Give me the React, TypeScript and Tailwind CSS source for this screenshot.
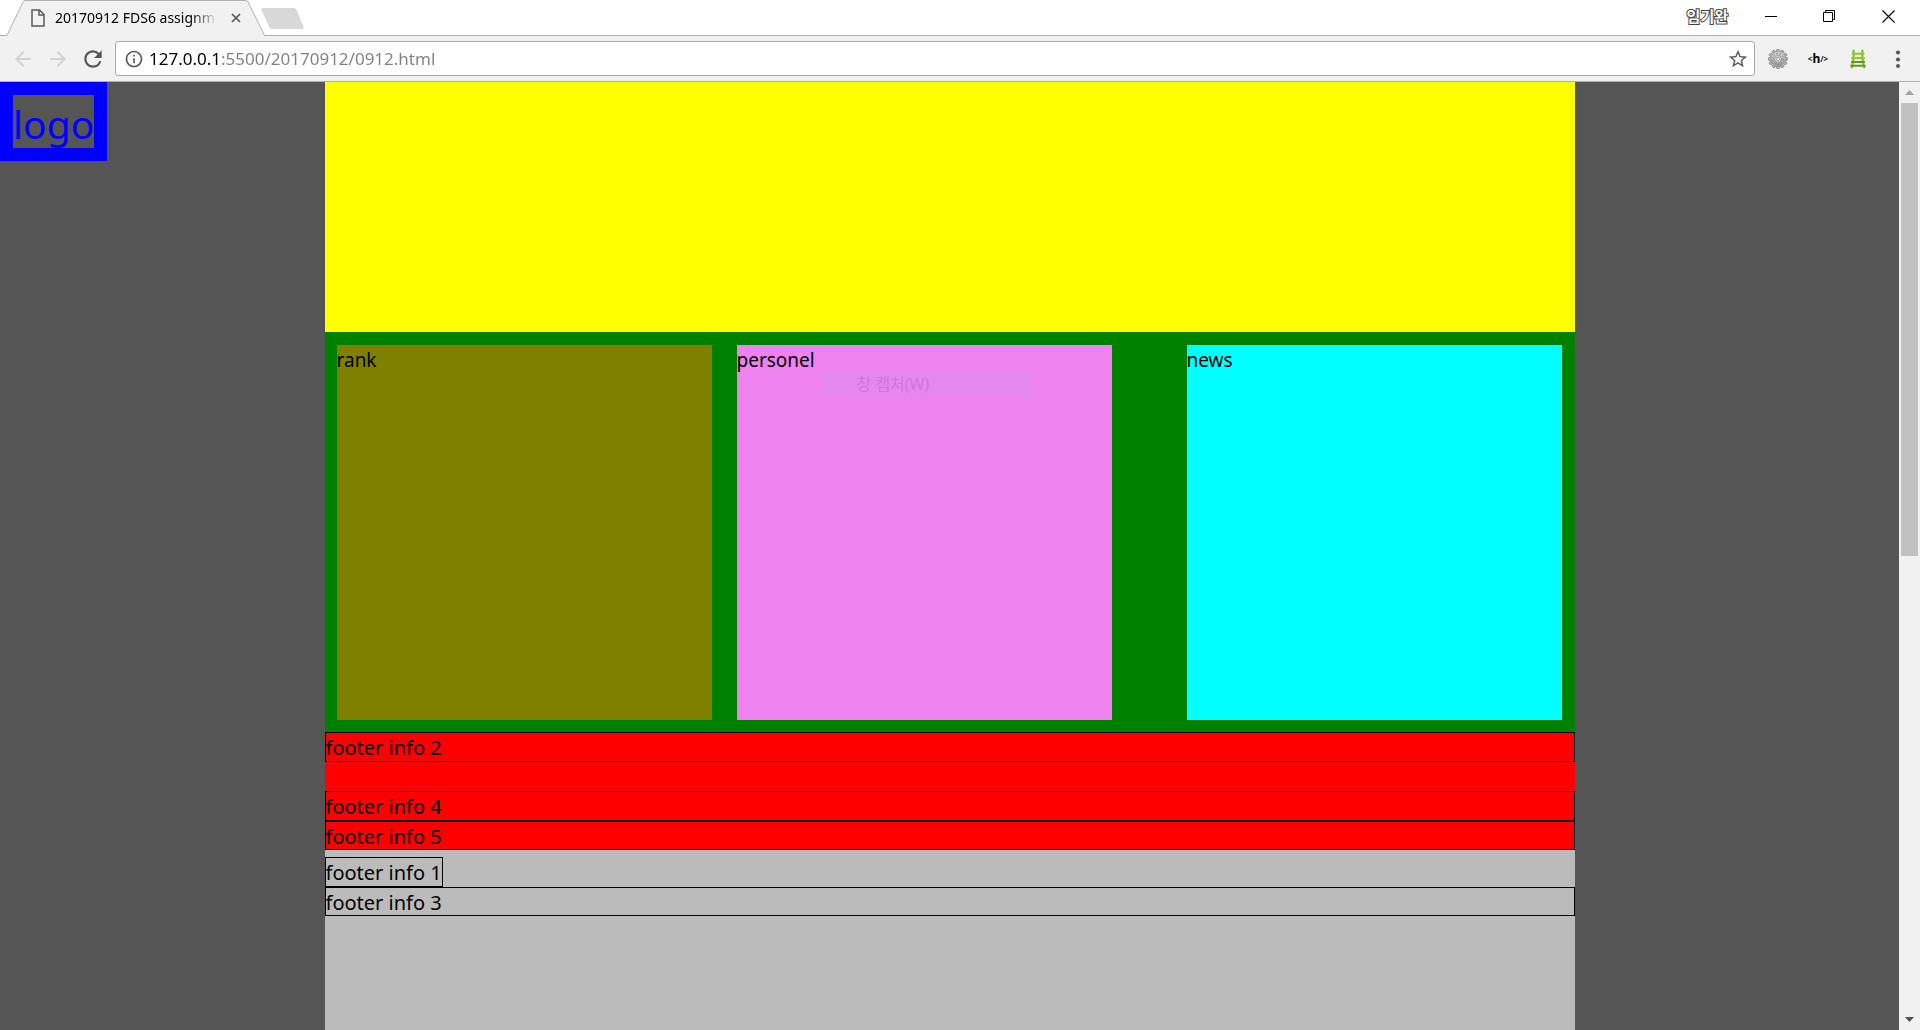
import type { ReactNode } from "react";
import {
  MdArrowBack,
  MdArrowForward,
  MdInfoOutline,
  MdRefresh,
  MdStarBorder,
} from "react-icons/md";

function IconButton({
  label,
  className,
  children,
}: {
  label: string;
  className: string;
  children: ReactNode;
}) {
  return (
    <button
      type="button"
      aria-label={label}
      className={`flex shrink-0 items-center justify-center ${className}`}
    >
      {children}
    </button>
  );
}

function PageIcon() {
  return (
    <svg width="14" height="18" viewBox="0 0 14 18" fill="none" stroke="#5a5a5a" strokeWidth="1.5">
      <path d="M1 1h7.5l4.5 4.5V17H1z" />
      <path d="M8 1v5h5" />
    </svg>
  );
}

function Gear() {
  const teeth = Array.from({ length: 12 }, (_, i) => (i * 360) / 12);
  return (
    <svg width="20" height="20" viewBox="0 0 20 20">
      <defs>
        <linearGradient id="metal" x1="0" y1="0" x2="0" y2="1">
          <stop offset="0" stopColor="#dcdcdc" />
          <stop offset="1" stopColor="#9a9a9a" />
        </linearGradient>
      </defs>
      {teeth.map((a) => (
        <rect
          key={a}
          x="8.6"
          y="0.3"
          width="2.8"
          height="3.4"
          rx="0.9"
          fill="#b4b4b4"
          stroke="#777"
          strokeWidth="0.7"
          transform={`rotate(${a} 10 10)`}
        />
      ))}
      <circle cx="10" cy="10" r="7.4" fill="url(#metal)" stroke="#8c8c8c" strokeWidth="0.6" />
      <circle cx="10" cy="10" r="5.3" fill="none" stroke="#7c7c7c" strokeWidth="1" strokeDasharray="1.8 1.4" />
      <circle cx="10" cy="10" r="3.4" fill="#e2e2e2" stroke="#858585" strokeWidth="0.8" />
      <circle cx="10" cy="10" r="1.6" fill="#fafafa" stroke="#777" strokeWidth="0.7" />
    </svg>
  );
}

function Ladder() {
  return (
    <svg width="16" height="20" viewBox="0 0 16 20" fill="none" strokeLinecap="round">
      <path d="M3.500 1.500C4.200 7 3.200 13 1.800 18.500M12.500 1.500C11.800 7 12.800 13 14.200 18.500" stroke="#86bf2a" strokeWidth="2.200" />
      <path d="M2.500 4.800h11M2 9h12" stroke="#8fcc1e" strokeWidth="2" />
      <path d="M1.800 13h12.400M1.200 16.800h13.600" stroke="#5f9a1c" strokeWidth="2" />
    </svg>
  );
}

function TitleBar() {
  return (
    <header className="flex h-9 shrink-0 items-stretch border-b border-[#b0b0b0] bg-white">
      <div className="relative -mb-px ml-[7px] flex w-[258px] items-center pl-6">
        <svg className="absolute inset-0" width="258" height="36" viewBox="0 0 258 36">
          <path d="M0 36v-1l16-33q.7-1.500 2-1.500H239q1.300 0 2 1.500l16 33v1z" fill="#f1f1f1" />
          <path d="M0 35.500 16 2q.7-1.500 2-1.500H239q1.300 0 2 1.500L257.500 35.500" fill="none" stroke="#b0b0b0" />
        </svg>
        <div className="relative flex items-center">
          <PageIcon />
          <span className="ml-[10px] w-[167px] text-sm whitespace-nowrap">
            <span className="bg-linear-to-r from-black from-85% to-black/10 bg-clip-text text-transparent">
              20170912 FDS6 assignm
            </span>
          </span>
          <IconButton label="Close tab" className="ml-1 size-5">
            <svg width="10" height="10" viewBox="0 0 10 10" stroke="#555" strokeWidth="1.700">
              <path d="M1 1l8 8M9 1L1 9" />
            </svg>
          </IconButton>
        </div>
      </div>
      <IconButton label="New tab" className="-ml-1 h-[38px]">
        <svg width="43" height="22" viewBox="0 0 43 22">
          <path d="M2 .5H33q1.500 0 2.200 1.500L42 19q.6 1.500-1 1.500H11q-1.500 0-2.200-1.500L.8 2Q.3.500 2 .5z" fill="#d8d8d8" stroke="#cdcdcd" strokeWidth=".6" />
        </svg>
      </IconButton>
      <div className="ml-auto flex h-8 items-center pr-[2px]">
        <span className="mr-[14px] text-[15px] font-bold text-white [-webkit-text-stroke:2px_#444] [paint-order:stroke]">
          임기완
        </span>
        <IconButton label="Minimize" className="w-[58px]">
          <svg width="13" height="13" viewBox="0 0 13 13" stroke="#000">
            <path d="M0 6.500h12" />
          </svg>
        </IconButton>
        <IconButton label="Restore" className="w-[58px]">
          <svg width="13" height="13" viewBox="0 0 13 13" fill="none" stroke="#000">
            <path d="M.5 2.500h9v9h-9zM2.500 2.500v-2h9v9h-2" />
          </svg>
        </IconButton>
        <IconButton label="Close" className="w-[60px]">
          <svg width="13" height="13" viewBox="0 0 13 13" stroke="#000" strokeWidth="1.100">
            <path d="M.5.5l12 12M12.500.5l-12 12" />
          </svg>
        </IconButton>
      </div>
    </header>
  );
}

function Toolbar() {
  return (
    <nav className="flex h-[46px] shrink-0 items-center border-b border-[#b0b0b0] bg-[#f1f1f1] pr-[2px] pl-[5px]">
      <IconButton label="Back" className="w-[35px] text-[#d2d2d2]">
        <MdArrowBack size={24} />
      </IconButton>
      <IconButton label="Forward" className="w-[35px] text-[#d2d2d2]">
        <MdArrowForward size={24} />
      </IconButton>
      <IconButton label="Reload" className="w-[35px] text-[#555]">
        <MdRefresh size={26} />
      </IconButton>
      <div className="ml-[5px] flex h-[35px] min-w-0 flex-1 items-center rounded-[3px] border border-[#a9a9a9] bg-white pr-1 pl-2 text-[#5a5a5a]">
        <MdInfoOutline size={20} className="shrink-0" />
        <input
          type="text"
          aria-label="Address"
          defaultValue="127.0.0.1:5500/20170912/0912.html"
          className="ml-[5px] min-w-0 flex-1 bg-[linear-gradient(to_right,#000_70px,#808080_70px)] bg-clip-text text-[17px] text-transparent outline-none"
        />
        <IconButton label="Bookmark" className="size-6">
          <MdStarBorder size={22} />
        </IconButton>
      </div>
      <IconButton label="Settings extension" className="ml-[3px] w-10">
        <Gear />
      </IconButton>
      <IconButton label="HTML extension" className="w-10 text-[8px] font-bold text-[#222]">
        &lt;<span className="text-[12px] text-black">h</span>/&gt;
      </IconButton>
      <IconButton label="Ladder extension" className="w-10">
        <Ladder />
      </IconButton>
      <IconButton label="Menu" className="w-10">
        <svg width="6" height="18" viewBox="0 0 6 18" fill="#5a5a5a">
          <circle cx="3" cy="2.500" r="2.100" />
          <circle cx="3" cy="9.500" r="2.100" />
          <circle cx="3" cy="16" r="2" />
        </svg>
      </IconButton>
    </nav>
  );
}

function ScrollBar() {
  return (
    <div className="flex w-[21px] shrink-0 flex-col bg-[#f1f1f1] px-[2px]">
      <IconButton label="Scroll up" className="h-[21px]">
        <svg width="9" height="5" viewBox="0 0 9 5" fill="#a3a3a3">
          <path d="M0 5 4.500 0 9 5z" />
        </svg>
      </IconButton>
      <div className="flex-1">
        <div className="h-1/2 bg-[#c1c1c1]" />
      </div>
      <IconButton label="Scroll down" className="h-[21px]">
        <svg width="9" height="5" viewBox="0 0 9 5" fill="#505050">
          <path d="M0 0h9L4.500 5z" />
        </svg>
      </IconButton>
    </div>
  );
}

function FooterInfo({ n, className }: { n: number; className: string }) {
  return <p className={`border border-black text-xl leading-[30px] ${className}`}>footer info {n}</p>;
}

function Page() {
  return (
    <main className="relative min-w-0 flex-1 overflow-hidden bg-[#555] text-[19px] leading-[30px] text-black">
      <h1 className="absolute top-0 left-0 border-[13px] border-[#00f] pt-1 text-[39px] leading-[49px] text-[#00f]">
        logo
      </h1>
      <div className="mx-auto min-h-full w-[1250px] max-w-full bg-[#bbb]">
        <section className="h-[250px] bg-[#ff0]" />
        <section className="flex gap-[25px] bg-[#008000] pt-[13px] pr-[13px] pb-3 pl-3">
          <div className="aspect-square w-[375px] bg-[#808000]">rank</div>
          <div className="relative aspect-square w-[375px] bg-[#ee82ee]">
            personel
            <div className="absolute top-[27px] left-[85px] w-[210px] bg-[#e588ee] pl-[35px] text-base leading-6 text-[#d672dc]">
              창 캡처(W)
            </div>
          </div>
          <div className="ml-auto aspect-square w-[375px] bg-[#0ff]">news</div>
        </section>
        <footer>
          <div className="bg-[#f00]">
            <FooterInfo n={2} className="mb-[29px] h-[30px]" />
            <FooterInfo n={4} className="h-[30px]" />
            <FooterInfo n={5} className="h-[29px]" />
          </div>
          <FooterInfo n={1} className="mt-[7px] h-[30px] w-fit" />
          <FooterInfo n={3} className="h-[29px]" />
        </footer>
      </div>
    </main>
  );
}

export default function App() {
  return (
    <div className="flex h-screen flex-col font-['Noto_Sans','Noto_Sans_CJK_KR',sans-serif]">
      <TitleBar />
      <Toolbar />
      <div className="flex min-h-0 flex-1">
        <Page />
        <ScrollBar />
      </div>
    </div>
  );
}
